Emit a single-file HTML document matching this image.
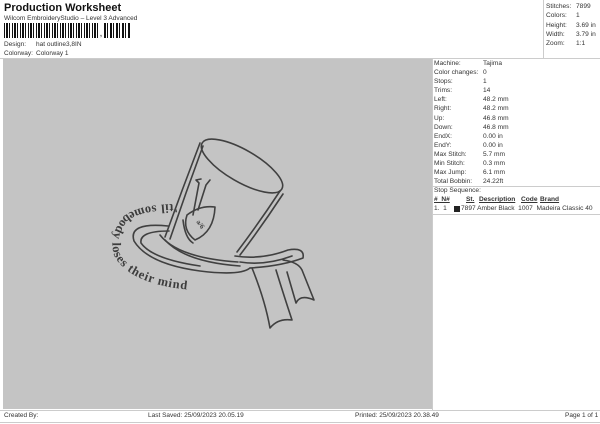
<!DOCTYPE html>
<html><head><meta charset="utf-8"><style>
*{margin:0;padding:0;box-sizing:border-box}
body{width:600px;height:424px;background:#fff;font-family:"Liberation Sans",sans-serif;font-size:7px;color:#333;position:relative;overflow:hidden}
.a{position:absolute;white-space:nowrap}
.bar{position:absolute;left:4px;top:23px;width:96px;height:15px;background:repeating-linear-gradient(90deg,#111 0 1px,#fff 1px 2px,#111 2px 4px,#fff 4px 5px,#111 5px 6px,#fff 6px 8px)}
.bar2{position:absolute;left:104px;top:23px;width:26px;height:15px;background:repeating-linear-gradient(90deg,#111 0 2px,#fff 2px 3px,#111 3px 4px,#fff 4px 6px)}
</style></head><body>
<div class="a" style="left:4px;top:2px;font-size:11px;font-weight:bold;color:#111">Production Worksheet</div>
<div class="a" style="left:4px;top:15px;font-size:6.5px">Wilcom EmbroideryStudio – Level 3 Advanced</div>
<div class="bar"></div><div class="a" style="left:100px;top:31px;font-weight:bold">,</div><div class="bar2"></div>
<div class="a" style="left:4px;top:41px;font-size:6.5px">Design:</div><div class="a" style="left:36px;top:41px;font-size:6.5px">hat outline3,8IN</div>
<div class="a" style="left:4px;top:50px;font-size:6.5px">Colorway:</div><div class="a" style="left:36px;top:50px;font-size:6.5px">Colorway 1</div>
<div style="position:absolute;left:0;top:58px;width:600px;border-top:1px solid #ccc"></div>
<div style="position:absolute;left:543px;top:0;height:58px;border-left:1px solid #ccc"></div>
<div class="a" style="left:546px;top:2px;line-height:9.3px;font-size:6.6px">Stitches:<br>Colors:<br>Height:<br>Width:<br>Zoom:</div>
<div class="a" style="left:576px;top:2px;line-height:9.3px;font-size:6.6px">7899<br>1<br>3.69 in<br>3.79 in<br>1:1</div>
<div style="position:absolute;left:3px;top:59px;width:429px;height:350px;background:#c4c4c4"></div>
<div style="position:absolute;left:432px;top:58px;height:352px;border-left:1px solid #ccc"></div>
<div class="a" style="left:434px;top:59px;line-height:9.1px;font-size:6.6px">Machine:<br>Color changes:<br>Stops:<br>Trims:<br>Left:<br>Right:<br>Up:<br>Down:<br>EndX:<br>EndY:<br>Max Stitch:<br>Min Stitch:<br>Max Jump:<br>Total Bobbin:</div>
<div class="a" style="left:483px;top:59px;line-height:9.1px;font-size:6.6px">Tajima<br>0<br>1<br>14<br>48.2 mm<br>48.2 mm<br>46.8 mm<br>46.8 mm<br>0.00 in<br>0.00 in<br>5.7 mm<br>0.3 mm<br>6.1 mm<br>24.22ft</div>
<div style="position:absolute;left:433px;top:186px;width:167px;border-top:1px solid #ccc"></div>
<div class="a" style="left:434px;top:187px;font-size:6.6px">Stop Sequence:</div>
<div class="a" style="left:434px;top:196px;font-size:6.6px;font-weight:bold;text-decoration:underline">#&nbsp;&nbsp;N#</div>
<div class="a" style="left:466px;top:196px;font-size:6.6px;font-weight:bold;text-decoration:underline">St.</div>
<div class="a" style="left:479px;top:196px;font-size:6.6px;font-weight:bold;text-decoration:underline">Description</div>
<div class="a" style="left:521px;top:196px;font-size:6.6px;font-weight:bold;text-decoration:underline">Code</div>
<div class="a" style="left:540px;top:196px;font-size:6.6px;font-weight:bold;text-decoration:underline">Brand</div>
<div class="a" style="left:434px;top:205px;font-size:6.6px">1.&nbsp;&nbsp;1</div>
<div style="position:absolute;left:454px;top:206px;width:6px;height:6px;background:#222"></div>
<div class="a" style="left:461px;top:205px;font-size:6.6px">7897 Amber Black&nbsp; 1007&nbsp; Madeira Classic 40</div>
<div style="position:absolute;left:433px;top:214px;width:167px;border-top:1px solid #ccc"></div>
<svg style="position:absolute;left:0;top:0" width="600" height="424" viewBox="0 0 600 424">
<g fill="none" stroke="#404040" stroke-width="1.6" stroke-linejoin="round" stroke-linecap="round">
<ellipse cx="242" cy="166" rx="46" ry="16" transform="rotate(30 242 166)"/>
<path d="M200 143 Q182 190 165 237"/><path d="M203 146 Q186 192 170 239"/>
<path d="M283 194 Q262 226 240 255"/><path d="M280 191 Q259 223 237 252"/>
<path d="M168 226 Q128 222 134 241 Q148 264 200 271 Q240 276 250 268"/>
<path d="M169 231 Q139 231 141 243 Q152 259 200 266"/>
<path d="M160 235 Q178 258 238 262"/><path d="M165 240 Q185 262 240 266"/>
<path d="M235 256 Q262 260 288 250 Q305 247 303 258 Q282 266 250 268"/>
<path d="M240 262 Q265 266 292 256"/>
<path d="M283 260 Q298 262 302 270 L314 300 Q300 294 296 303 L287 272"/>
<path d="M252 268 Q265 300 270 328 Q278 318 292 320 Q284 296 276 270"/>
<path d="M187 215 Q200 205 215 207 Q214 232 195 240 Q182 230 187 215Z"/>
<path d="M183 220 Q185 238 193 243"/>
<path d="M193 215 L199 183 M198 210 L206 185 L210 180 M199 183 L196 180 L201 179"/>
</g>
<g font-family="Liberation Serif,serif" font-size="7" font-weight="bold" fill="#404040"><text x="196" y="226" transform="rotate(55 200 224)">a/6</text></g>
<defs><path id="arc" d="M178 204 Q140 204 124 216 Q108 235 114 255 Q126 280 175 288 Q220 294 268 294"/></defs>
<text font-family="Liberation Serif,serif" font-weight="bold" font-size="12.5" fill="#3c3c3c" textLength="182" lengthAdjust="spacing"><textPath href="#arc">'til somebody loses their mind</textPath></text>
</svg>
<div style="position:absolute;left:0;top:410px;width:600px;border-top:1px solid #ccc"></div>
<div style="position:absolute;left:0;top:422px;width:600px;border-top:1px solid #ccc"></div>
<div class="a" style="left:4px;top:412px;font-size:6.5px">Created By:</div>
<div class="a" style="left:148px;top:412px;font-size:6.5px">Last Saved: 25/09/2023 20.05.19</div>
<div class="a" style="left:355px;top:412px;font-size:6.5px">Printed: 25/09/2023 20.38.49</div>
<div class="a" style="left:565px;top:412px;font-size:6.5px">Page 1 of 1</div>
</body></html>
